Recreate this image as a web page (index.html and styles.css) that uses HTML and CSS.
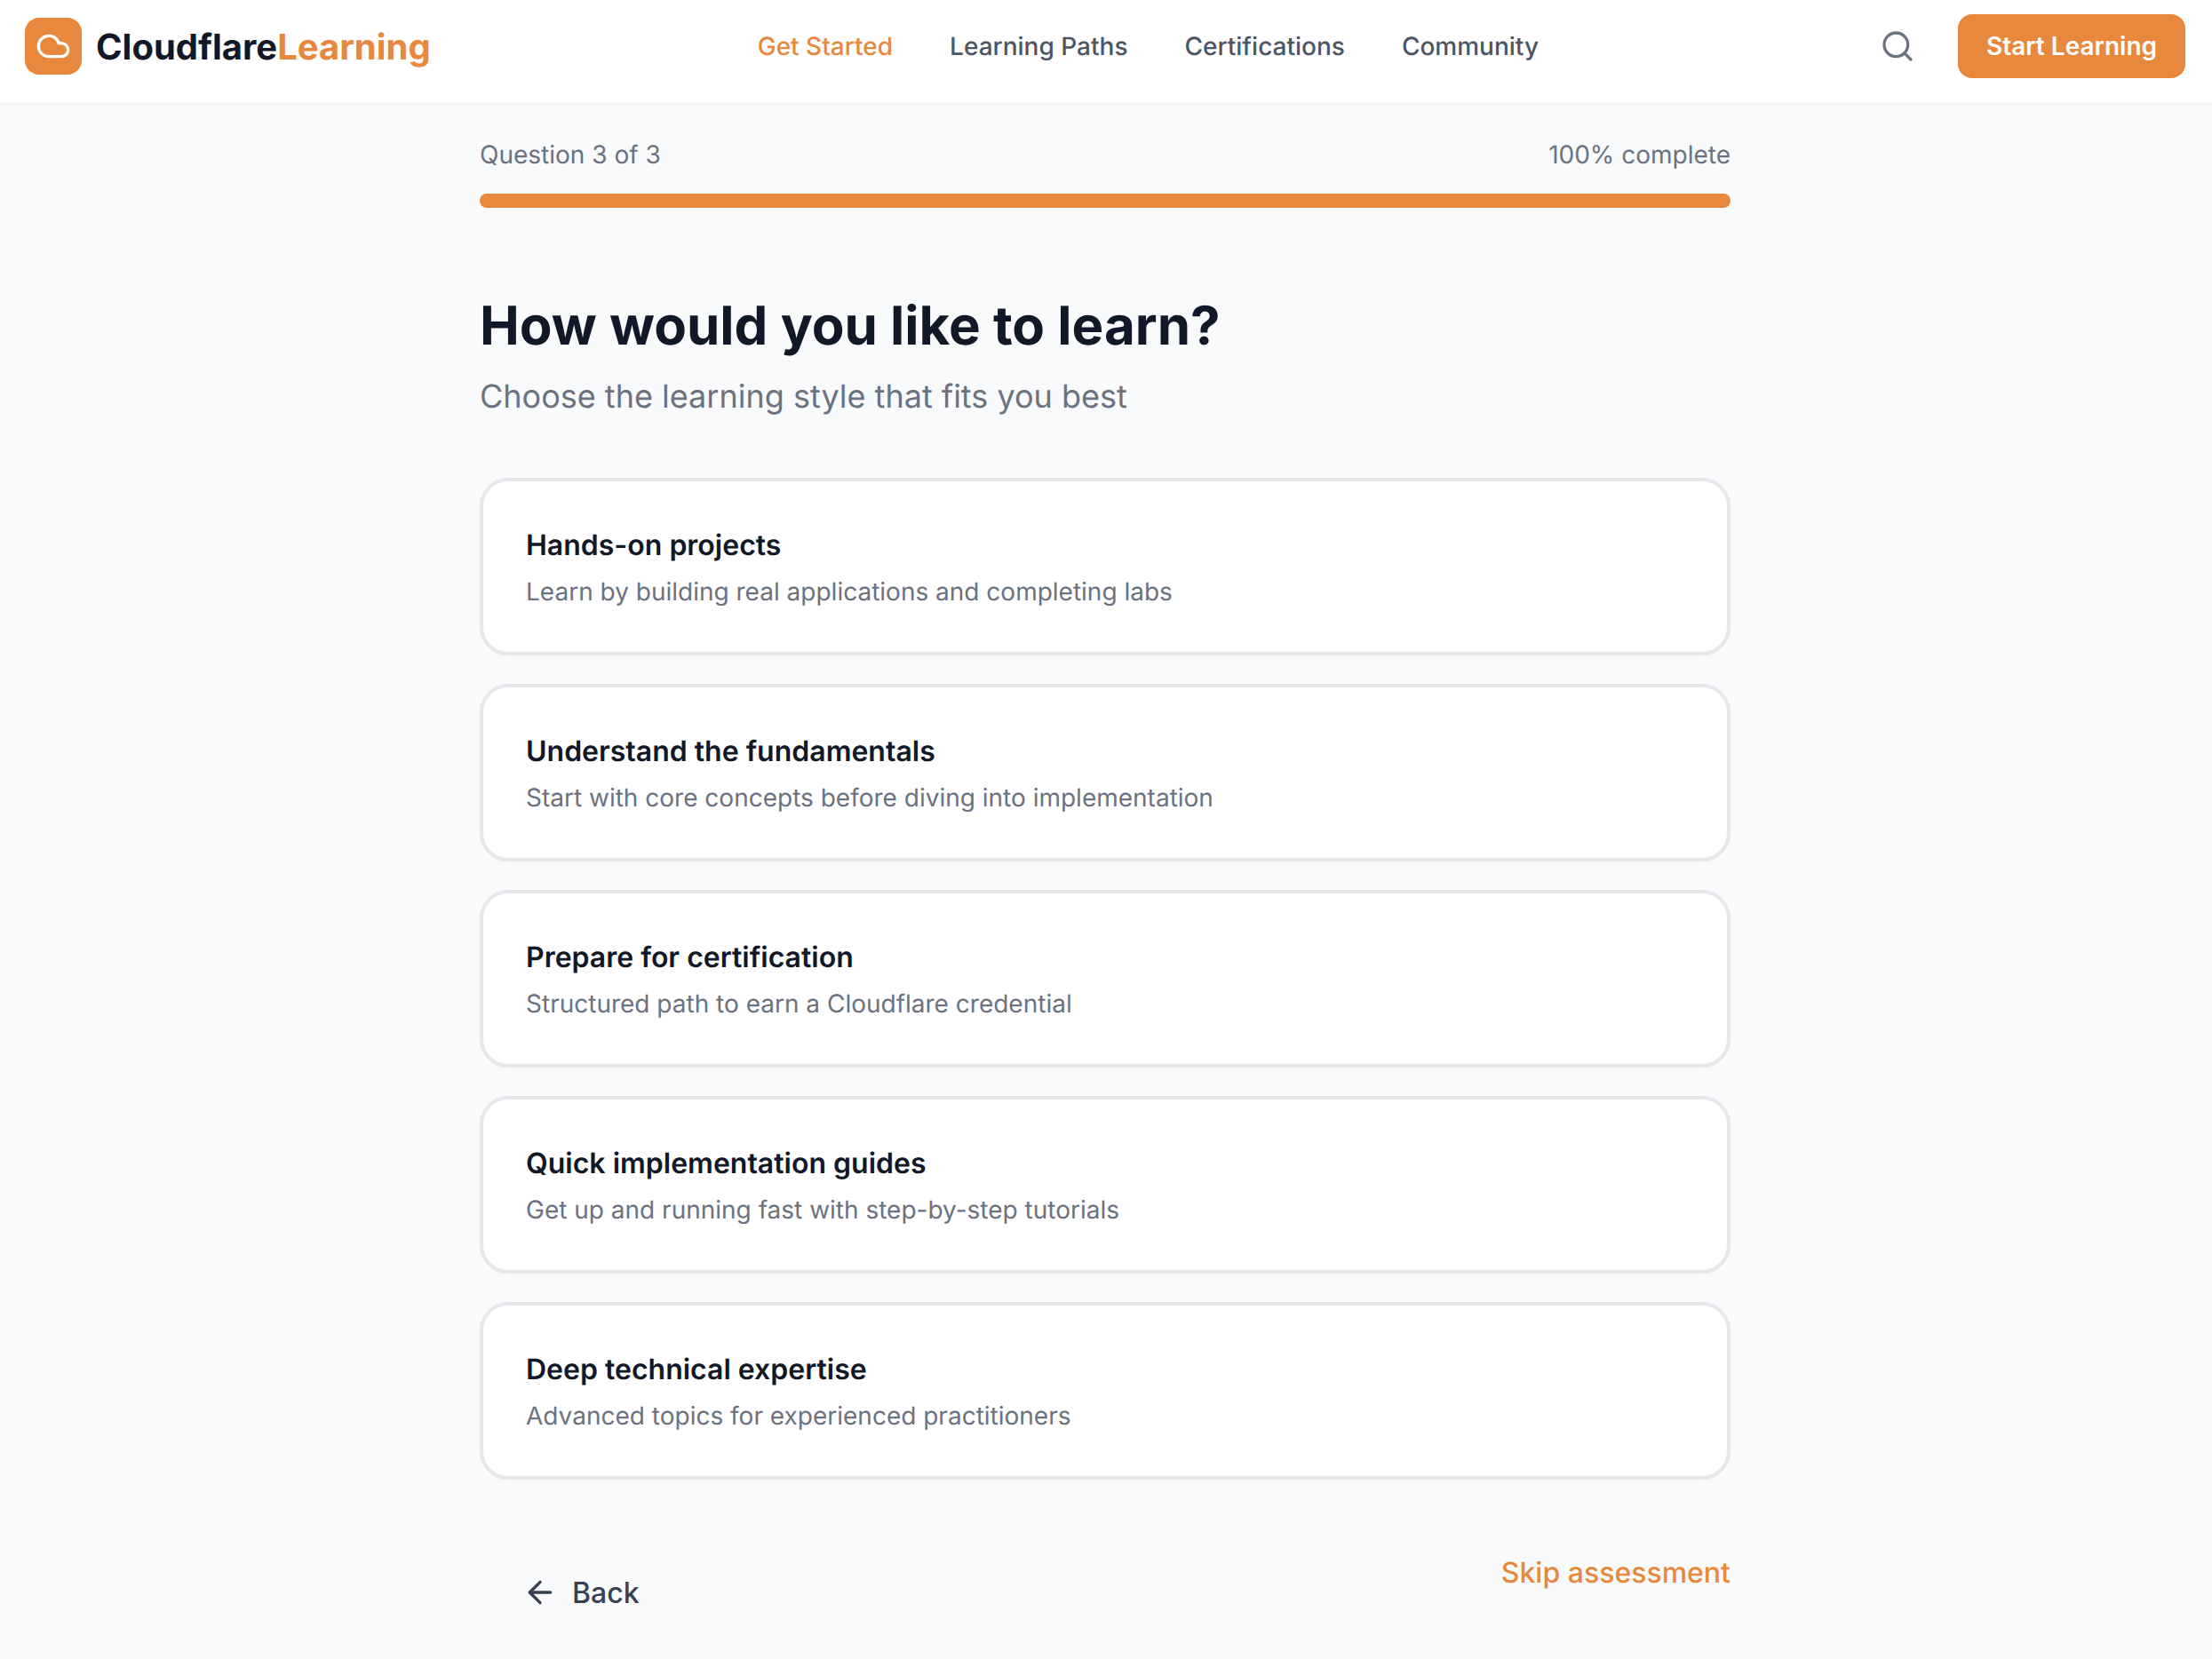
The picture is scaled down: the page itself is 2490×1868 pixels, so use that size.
FILE: index.html
```html
<!DOCTYPE html>
<html lang="en">
<head>
  <meta charset="UTF-8" />
  <meta name="viewport" content="width=device-width, initial-scale=1.0" />
  <title>Cloudflare Learning</title>
  <link rel="stylesheet" href="styles.css">
</head>
<body>
  <header class="header">
    <a class="logo">
      <span class="logo-mark">
        <svg width="40" height="40" viewBox="0 0 24 24" fill="none" stroke="#fff" stroke-width="2" stroke-linecap="round" stroke-linejoin="round"><path d="M17.5 19H9a7 7 0 1 1 6.71-9h1.79a4.5 4.5 0 1 1 0 9Z"/></svg>
      </span>
      <span class="logo-text">Cloudflare<span class="accent">Learning</span></span>
    </a>
    <nav class="nav">
      <a class="nav-link active">Get Started</a>
      <a class="nav-link">Learning Paths</a>
      <a class="nav-link">Certifications</a>
      <a class="nav-link">Community</a>
    </nav>
    <div class="header-right">
      <span class="search">
        <svg width="40" height="40" viewBox="0 0 24 24" fill="none" stroke="#6b7280" stroke-width="2" stroke-linecap="round" stroke-linejoin="round"><circle cx="11" cy="11" r="8"/><path d="m21 21-4.3-4.3"/></svg>
      </span>
      <button class="start-btn">Start Learning</button>
    </div>
  </header>

  <main class="container">
    <div class="progress-labels">
      <span>Question 3 of 3</span>
      <span>100% complete</span>
    </div>
    <div class="progress-bar"><div class="progress-fill"></div></div>

    <h1 class="title">How would you like to learn?</h1>
    <p class="subtitle">Choose the learning style that fits you best</p>

    <div class="options">
      <div class="option">
        <h3>Hands-on projects</h3>
        <p>Learn by building real applications and completing labs</p>
      </div>
      <div class="option">
        <h3>Understand the fundamentals</h3>
        <p>Start with core concepts before diving into implementation</p>
      </div>
      <div class="option">
        <h3>Prepare for certification</h3>
        <p>Structured path to earn a Cloudflare credential</p>
      </div>
      <div class="option">
        <h3>Quick implementation guides</h3>
        <p>Get up and running fast with step-by-step tutorials</p>
      </div>
      <div class="option">
        <h3>Deep technical expertise</h3>
        <p>Advanced topics for experienced practitioners</p>
      </div>
    </div>

    <div class="actions">
      <button class="back-btn">
        <svg width="40" height="40" viewBox="0 0 24 24" fill="none" stroke="#374151" stroke-width="2" stroke-linecap="round" stroke-linejoin="round"><path d="m12 19-7-7 7-7"/><path d="M19 12H5"/></svg>
        Back
      </button>
      <a class="skip">Skip assessment</a>
    </div>
  </main>
</body>
</html>
```

FILE: styles.css
```css
* {
  box-sizing: border-box;
}
body {
  margin: 0;
  font-family: Inter, "Noto Sans", sans-serif;
  background-color: #f9fafb;
  color: #111827;
  text-rendering: geometricPrecision;
}
.header {
  height: 118px;
  background: #fff;
  border-bottom: 2px solid #f3f4f6;
  padding: 0 30px 12px 28px;
  display: flex;
  justify-content: space-between;
  align-items: center;
}
.logo {
  display: flex;
  align-items: center;
  gap: 16px;
}
.logo-mark {
  width: 64px;
  height: 64px;
  border-radius: 16px;
  background: #e8883c;
  display: flex;
  align-items: center;
  justify-content: center;
}
.logo-text {
  font-size: 40px;
  font-weight: 700;
}
.accent {
  color: #e8883c;
}
.nav {
  display: flex;
  gap: 64px;
}
.nav-link {
  font-size: 28px;
  font-weight: 500;
  color: #4b5563;
}
.nav-link.active {
  color: #e8883c;
}
.header-right {
  display: flex;
  align-items: center;
  gap: 32px;
}
.search {
  display: flex;
  padding: 16px;
}
.start-btn {
  width: 256px;
  height: 72px;
  border: none;
  border-radius: 16px;
  background: #e8883c;
  color: #fff;
  font-family: inherit;
  font-size: 28px;
  font-weight: 600;
}
.container {
  width: 1408px;
  margin: 0 auto;
  padding-top: 36px;
  transform: translateX(-1px);
}
.progress-labels {
  display: flex;
  justify-content: space-between;
  font-size: 28px;
  line-height: 40px;
  color: #6b7280;
  margin-bottom: 24px;
}
.progress-bar {
  height: 16px;
  border-radius: 8px;
  background: #e5e7eb;
  overflow: hidden;
}
.progress-fill {
  width: 100%;
  height: 100%;
  background: #e8883c;
}
.title {
  margin: 96px 0 0;
  font-size: 60px;
  line-height: 75px;
  font-weight: 700;
}
.subtitle {
  margin: 17px 0 0;
  font-size: 36px;
  line-height: 48px;
  color: #6b7280;
}
.options {
  margin-top: 68px;
  display: flex;
  flex-direction: column;
  gap: 32px;
}
.option {
  height: 200px;
  background: #fff;
  border: 4px solid #e5e7eb;
  border-radius: 32px;
  padding: 48px;
}
.option h3 {
  margin: 0;
  font-size: 32px;
  line-height: 48px;
  font-weight: 600;
}
.option p {
  margin: 8px 0 0;
  font-size: 28px;
  line-height: 40px;
  color: #6b7280;
}
.actions {
  margin-top: 83px;
  display: flex;
  justify-content: space-between;
  align-items: flex-start;
}
.back-btn {
  display: flex;
  align-items: center;
  gap: 16px;
  height: 88px;
  padding: 0 48px;
  border: none;
  background: none;
  color: #374151;
  font-family: inherit;
  font-size: 32px;
  font-weight: 500;
}
.skip {
  color: #e8883c;
  font-size: 32px;
  font-weight: 500;
  line-height: 44px;
}
```
